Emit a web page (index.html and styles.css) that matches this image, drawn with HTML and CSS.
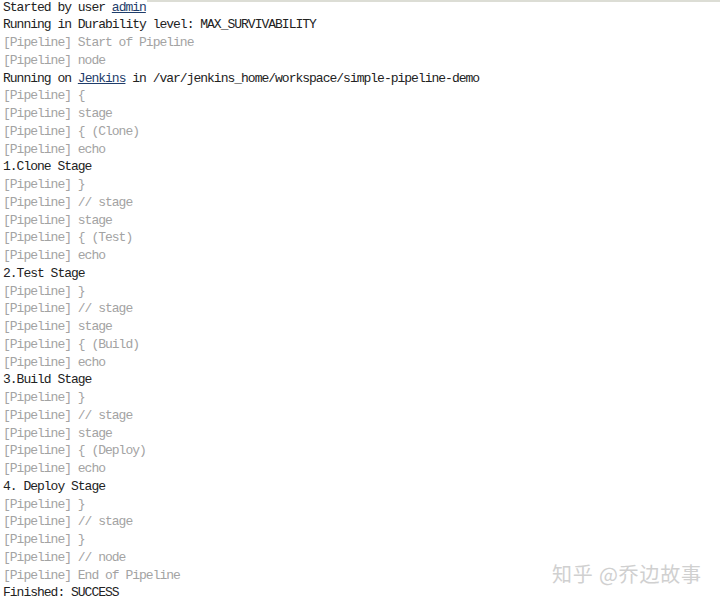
FILE: index.html
```html
<!DOCTYPE html>
<html>
<head>
<meta charset="utf-8">
<link rel="stylesheet" href="styles.css">
</head>
<body>
<div class="console">
<div class="line first"><span>Started by user <a class="lnk" href="#">admin</a></span><span class="rule"></span></div>
<div class="line">Running in Durability level: MAX_SURVIVABILITY</div>
<div class="line pl">[Pipeline] Start of Pipeline</div>
<div class="line pl">[Pipeline] node</div>
<div class="line">Running on <a class="lnk" href="#">Jenkins</a> in /var/jenkins_home/workspace/simple-pipeline-demo</div>
<div class="line pl">[Pipeline] {</div>
<div class="line pl">[Pipeline] stage</div>
<div class="line pl">[Pipeline] { (Clone)</div>
<div class="line pl">[Pipeline] echo</div>
<div class="line">1.Clone Stage</div>
<div class="line pl">[Pipeline] }</div>
<div class="line pl">[Pipeline] // stage</div>
<div class="line pl">[Pipeline] stage</div>
<div class="line pl">[Pipeline] { (Test)</div>
<div class="line pl">[Pipeline] echo</div>
<div class="line">2.Test Stage</div>
<div class="line pl">[Pipeline] }</div>
<div class="line pl">[Pipeline] // stage</div>
<div class="line pl">[Pipeline] stage</div>
<div class="line pl">[Pipeline] { (Build)</div>
<div class="line pl">[Pipeline] echo</div>
<div class="line">3.Build Stage</div>
<div class="line pl">[Pipeline] }</div>
<div class="line pl">[Pipeline] // stage</div>
<div class="line pl">[Pipeline] stage</div>
<div class="line pl">[Pipeline] { (Deploy)</div>
<div class="line pl">[Pipeline] echo</div>
<div class="line">4. Deploy Stage</div>
<div class="line pl">[Pipeline] }</div>
<div class="line pl">[Pipeline] // stage</div>
<div class="line pl">[Pipeline] }</div>
<div class="line pl">[Pipeline] // node</div>
<div class="line pl">[Pipeline] End of Pipeline</div>
<div class="line">Finished: SUCCESS</div>
</div>
<div class="watermark">知乎 @乔边故事</div>
</body>
</html>
```
FILE: styles.css
```css
html, body {
  margin: 0;
  padding: 0;
  background: #ffffff;
}
body {
  position: relative;
  width: 720px;
  height: 602px;
  overflow: hidden;
}
.console {
  margin-top: -1.5px;
  padding-left: 3px;
  font-family: "Liberation Mono", monospace;
  font-size: 13px;
  letter-spacing: -1px;
  line-height: 17.76px;
  color: #222222;
}
.line {
  height: 17.76px;
  white-space: pre;
}
.first {
  display: flex;
}
.rule {
  flex: 1;
  align-self: flex-start;
  margin-top: 1.5px;
  margin-left: 1px;
  border-top: 2px solid #dcddd5;
}
.pl {
  color: #a3a3a3;
}
.lnk {
  color: #1f3d6b;
  text-decoration: underline;
}
.watermark {
  position: absolute;
  left: 552px;
  top: 559px;
  font-family: "Noto Sans CJK SC", sans-serif;
  font-size: 20px;
  color: #d0d0d0;
  letter-spacing: 0.8px;
}
```
